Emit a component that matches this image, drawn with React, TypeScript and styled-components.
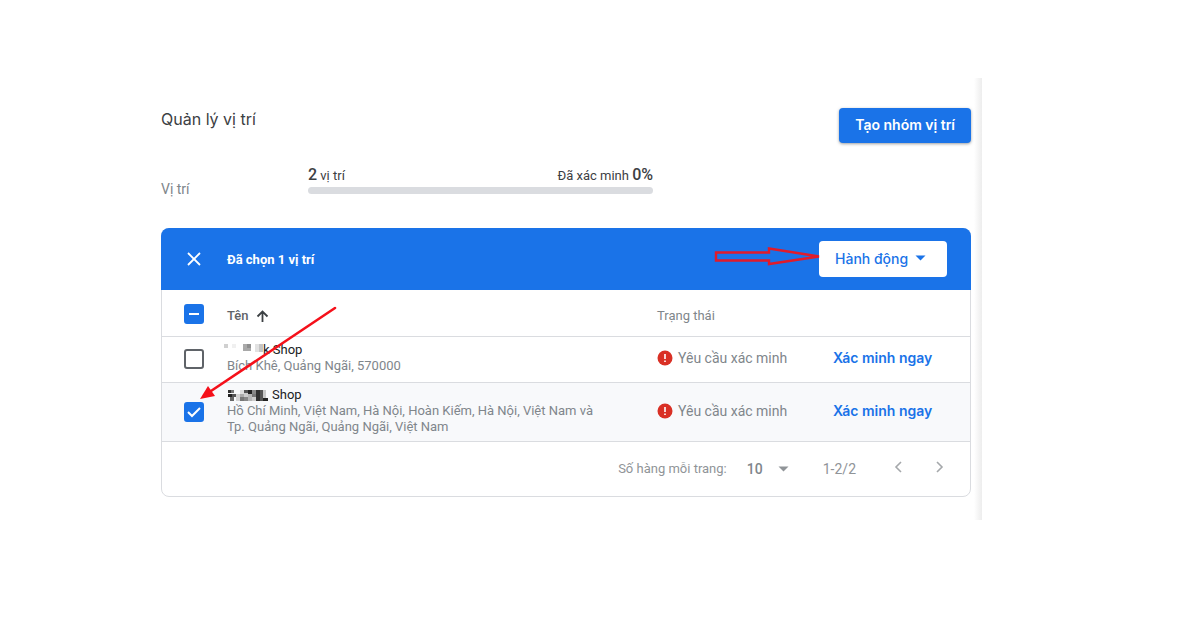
import React, { useEffect, useRef, useState } from 'react';
import styled, { createGlobalStyle } from 'styled-components';

const BLUE = '#1a73e8';
const LINE = '#dadce0';

const GlobalStyle = createGlobalStyle`
  *, *::before, *::after { box-sizing: border-box; }
  body { margin: 0; background: #fff; font-family: Roboto, "Noto Sans", sans-serif; font-size: 14px; color: #3c4043; }
  button, input, select { font: inherit; margin: 0; }
`;

const Page = styled.main`
  display: flex;
  padding: 78px 218px 104px 161px;
`;

const Content = styled.div`
  flex: 1;
  min-width: 0;
  padding: 30px 3px 23px 0;
`;

const SheetEdge = styled.div`
  width: 8px;
  background: linear-gradient(to right, #fff, #f4f4f4 60%, #ededed);
`;

const Header = styled.header`
  display: flex;
  justify-content: space-between;
  align-items: flex-start;
`;

const Title = styled.h1`
  margin: 0;
  font-family: Inter, "Noto Sans", sans-serif;
  font-size: 16px;
  font-weight: 400;
  line-height: 22px;
`;

const PrimaryButton = styled.button`
  height: 35px;
  padding: 0 16px 2px;
  border: 0;
  border-radius: 4px;
  background: ${BLUE};
  color: #fff;
  font-family: Inter, "Noto Sans", sans-serif;
  font-size: 14px;
  font-weight: 600;
  box-shadow: 0 1px 3px rgba(60, 64, 67, 0.5);
`;

const Stats = styled.section`
  display: flex;
  align-items: flex-end;
  margin: 22px 0 29px;
`;

const StatsLabel = styled.span`
  width: 147px;
  line-height: 20px;
  color: #80868b;
`;

const Meter = styled.div`
  width: 345px;
  padding-bottom: 5px;
`;

const MeterText = styled.div`
  display: flex;
  justify-content: space-between;
  line-height: 20px;
  margin-bottom: 1px;
  font-size: 13px;

  strong { font-size: 16px; font-weight: 500; }
`;

const MeterTrack = styled.div`
  height: 7px;
  border-radius: 4px;
  background: ${LINE};
`;

const Card = styled.section`
  position: relative;
  border: 1px solid ${LINE};
  border-radius: 8px;
`;

const SelectionBar = styled.div`
  position: relative;
  display: flex;
  align-items: center;
  height: 62px;
  margin: -1px -1px 0;
  padding: 0 24px 0 21px;
  border-radius: 8px 8px 0 0;
  background: ${BLUE};
  color: #fff;
`;

const IconButton = styled.button`
  display: grid;
  place-items: center;
  width: 24px;
  height: 24px;
  padding: 0;
  border: 0;
  background: none;
  color: inherit;
`;

const SelectionText = styled.span`
  flex: 1;
  margin-left: 21px;
  font-weight: 700;
  font-size: 13px;
`;

const MenuButton = styled.button`
  display: flex;
  align-items: center;
  gap: 7px;
  width: 128px;
  height: 36px;
  padding: 0 16px 2px;
  border: 0;
  border-radius: 4px;
  background: #fff;
  color: ${BLUE};
  font-family: Inter, "Noto Sans", sans-serif;
  font-weight: 500;
`;

const Table = styled.table`
  width: 100%;
  border-collapse: collapse;
  table-layout: fixed;
`;

const HeadRow = styled.tr`
  height: 46px;
  border-bottom: 1px solid ${LINE};
`;

const Row = styled.tr<{ $selected: boolean; $tall: boolean }>`
  height: ${(p) => (p.$tall ? 59 : 46)}px;
  border-bottom: 1px solid ${LINE};
  background: ${(p) => (p.$selected ? '#f8f9fb' : 'transparent')};
`;

const HeadCell = styled.th<{ $strong?: boolean }>`
  padding: 6px 0 0;
  text-align: left;
  font-size: 13px;
  font-weight: ${(p) => (p.$strong ? 500 : 400)};
  color: ${(p) => (p.$strong ? '#5f6368' : '#80868b')};
`;

const SortLabel = styled.span`
  display: flex;
  align-items: center;
  gap: 7px;
`;

const Cell = styled.td`
  padding: 0 0 2px;
  line-height: 16px;
  color: #80868b;
`;

const TickCell = styled(Cell)`
  padding: 0 0 0 22px;

  thead & { padding-top: 3px; }
`;

const NameCell = styled(Cell)`
  padding-right: 48px;
  font-size: 13px;
`;

const ShopName = styled.div`
  display: flex;
  align-items: center;
  gap: 4px;
  color: #202124;
`;

const Status = styled.span`
  display: flex;
  align-items: center;
  gap: 5px;
`;

const VerifyLink = styled.a`
  color: ${BLUE};
  text-decoration: none;
  font-family: Inter, "Noto Sans", sans-serif;
  font-weight: 600;
`;

const TickLabel = styled.label`
  display: grid;
  width: 20px;
  height: 20px;

  > * { grid-area: 1 / 1; }
  svg { pointer-events: none; }
`;

const TickInput = styled.input`
  appearance: none;
  width: 20px;
  height: 20px;
  border: 2px solid #5f6368;
  border-radius: 3px;
  background: #fff;

  &:checked, &:indeterminate { border-color: ${BLUE}; background: ${BLUE}; }
`;

const Footer = styled.footer`
  display: flex;
  align-items: center;
  justify-content: flex-end;
  height: 54px;
  padding-right: 18px;
  color: #909498;
`;

const PageSize = styled.label`
  display: flex;
  align-items: center;
  gap: 20px;
  font-size: 13px;
`;

const SelectBox = styled.span`
  display: grid;
  align-items: center;
  width: 42px;
  font-size: 14px;

  > * { grid-area: 1 / 1; }
  svg { justify-self: end; pointer-events: none; }
`;

const Select = styled.select`
  appearance: none;
  width: 100%;
  padding: 0;
  border: 0;
  background: none;
  color: #80868b;
  font-weight: 500;
`;

const Range = styled.span`
  margin: 0 30px 0 34px;
`;

const Pager = styled.nav`
  display: flex;
  gap: 18px;
  padding-bottom: 3px;
`;

const PointerArrow = styled.svg`
  position: absolute;
  left: 37px;
  top: 77px;
  pointer-events: none;
`;

const OutlineArrow = styled.svg`
  position: absolute;
  right: 148px;
  top: 19px;
  pointer-events: none;
`;

type Block = [x: number, y: number, w: number, h: number, fill: string];

const blocksOne: Block[] = [
  [-3, 0, 4, 4, '#d0d0d0'], [5, 0, 4, 4, '#f0f0f0'], [16, 0, 4, 4, '#aaa'],
  [20, 0, 4, 4, '#8e8e8e'], [16, 4, 8, 3, '#a8a8a8'], [28, 0, 4, 8, '#e2e2e2'],
  [32, 0, 4, 8, '#c5c5c5'],
];

const blocksTwo: Block[] = [
  [1, 1, 4, 3, '#333'], [4, 1, 3, 3, '#777'], [1, 5, 4, 3, '#222'], [5, 5, 4, 3, '#555'],
  [3, 8, 4, 4, '#666'], [9, 5, 4, 7, '#d4d4d4'], [13, 1, 4, 4, '#ddd'], [13, 8, 4, 4, '#777'],
  [13, 5, 4, 3, '#aaa'], [17, 1, 4, 3, '#555'], [17, 4, 4, 4, '#ccc'], [17, 8, 4, 4, '#888'],
  [21, 1, 4, 4, '#222'], [21, 5, 4, 7, '#b5b5b5'], [25, 1, 4, 4, '#888'], [25, 5, 4, 3, '#777'],
  [25, 8, 4, 4, '#ccc'], [29, 1, 4, 11, '#303030'], [33, 1, 3, 11, '#555'], [36, 9, 5, 3, '#222'],
  [36, 1, 3, 8, '#c8c8c8'],
];

function Mosaic({ blocks, width }: { blocks: Block[]; width: number }) {
  return (
    <svg width={width} height="12" overflow="visible" aria-hidden="true">
      {blocks.map(([x, y, w, h, fill]) => (
        <rect key={`${x}-${y}`} x={x} y={y} width={w} height={h} fill={fill} />
      ))}
    </svg>
  );
}

interface TickProps {
  label: string;
  checked: boolean;
  mixed?: boolean;
  onChange: () => void;
}

function Tick({ label, checked, mixed = false, onChange }: TickProps) {
  const ref = useRef<HTMLInputElement>(null);
  useEffect(() => {
    if (ref.current) ref.current.indeterminate = mixed;
  }, [mixed]);
  return (
    <TickLabel>
      <TickInput ref={ref} type="checkbox" aria-label={label} checked={checked} onChange={onChange} />
      <svg width="20" height="20" fill="none" stroke="#fff" strokeWidth="2">
        {mixed && <path d="M5 10h10" />}
        {!mixed && checked && <path d="M4 10l4 4 8-8" />}
      </svg>
    </TickLabel>
  );
}

function Caret({ color }: { color: string }) {
  return (
    <svg width="11" height="6" aria-hidden="true">
      <path d="M.5 .5h10l-5 5z" fill={color} />
    </svg>
  );
}

function Alert() {
  return (
    <svg width="16" height="16" aria-hidden="true">
      <circle cx="8" cy="8" r="7.5" fill="#d93025" />
      <path d="M8 4v5M8 10.500v1.600" stroke="#fff" strokeWidth="1.6" />
    </svg>
  );
}

const shops = [
  { id: 1, initial: 'k', blocks: blocksOne, mosaicWidth: 32, tall: false, address: 'Bích Khê, Quảng Ngãi, 570000' },
  { id: 2, initial: '', blocks: blocksTwo, mosaicWidth: 41, tall: true, address: 'Hồ Chí Minh, Việt Nam, Hà Nội, Hoàn Kiếm, Hà Nội, Việt Nam và Tp. Quảng Ngãi, Quảng Ngãi, Việt Nam' },
];

export default function App() {
  const [selected, setSelected] = useState<number[]>([2]);
  const all = selected.length === shops.length;
  const toggle = (id: number) =>
    setSelected((s) => (s.includes(id) ? s.filter((x) => x !== id) : [...s, id]));

  return (
    <Page>
      <GlobalStyle />
      <Content>
        <Header>
          <Title>Quản lý vị trí</Title>
          <PrimaryButton type="button">Tạo nhóm vị trí</PrimaryButton>
        </Header>
        <Stats>
          <StatsLabel>Vị trí</StatsLabel>
          <Meter>
            <MeterText>
              <span><strong>2</strong> vị trí</span>
              <span>Đã xác minh <strong>0%</strong></span>
            </MeterText>
            <MeterTrack />
          </Meter>
        </Stats>
        <Card>
          <SelectionBar>
            <IconButton type="button" aria-label="Bỏ chọn" onClick={() => setSelected([])}>
              <svg width="14" height="14" stroke="currentColor" strokeWidth="1.8">
                <path d="M1 1l12 12M13 1L1 13" />
              </svg>
            </IconButton>
            <SelectionText>Đã chọn {selected.length} vị trí</SelectionText>
            <MenuButton type="button" aria-haspopup="menu">
              Hành động <Caret color={BLUE} />
            </MenuButton>
            <OutlineArrow width="112" height="20" fill="none" stroke="#e01b2b" strokeWidth="2.4">
              <path d="M5 5.500h53v-4L108 9.500 58 17v-3.500H5z" />
            </OutlineArrow>
          </SelectionBar>
          <Table>
            <colgroup>
              <col style={{ width: 65 }} />
              <col />
              <col style={{ width: 176 }} />
              <col style={{ width: 137 }} />
            </colgroup>
            <thead>
              <HeadRow>
                <TickCell>
                  <Tick
                    label="Chọn tất cả"
                    checked={all}
                    mixed={selected.length > 0 && !all}
                    onChange={() => setSelected(all ? [] : shops.map((s) => s.id))}
                  />
                </TickCell>
                <HeadCell $strong scope="col">
                  <SortLabel>
                    Tên
                    <svg width="13" height="12" fill="none" stroke="#3c4043" strokeWidth="1.8">
                      <path d="M6.500 12V1.500M1.500 6.500l5-5 5 5" />
                    </svg>
                  </SortLabel>
                </HeadCell>
                <HeadCell scope="col">Trạng thái</HeadCell>
                <Cell />
              </HeadRow>
            </thead>
            <tbody>
              {shops.map((shop) => (
                <Row key={shop.id} $selected={selected.includes(shop.id)} $tall={shop.tall}>
                  <TickCell>
                    <Tick
                      label={`Chọn ${shop.address}`}
                      checked={selected.includes(shop.id)}
                      onChange={() => toggle(shop.id)}
                    />
                  </TickCell>
                  <NameCell>
                    <ShopName>
                      <Mosaic blocks={shop.blocks} width={shop.mosaicWidth} />
                      <span>{shop.initial ? `${shop.initial} Shop` : 'Shop'}</span>
                    </ShopName>
                    {shop.address}
                  </NameCell>
                  <Cell>
                    <Status><Alert />Yêu cầu xác minh</Status>
                  </Cell>
                  <Cell>
                    <VerifyLink href="#verify">Xác minh ngay</VerifyLink>
                  </Cell>
                </Row>
              ))}
            </tbody>
          </Table>
          <Footer>
            <PageSize>
              Số hàng mỗi trang:
              <SelectBox>
                <Select defaultValue="10">
                  <option>10</option>
                  <option>25</option>
                </Select>
                <Caret color="#909498" />
              </SelectBox>
            </PageSize>
            <Range>1-2/2</Range>
            <Pager aria-label="Phân trang">
              <IconButton type="button" aria-label="Trang trước">
                <svg width="8" height="12" fill="none" stroke="#a5a8ab" strokeWidth="1.6">
                  <path d="M7 1L2 6l5 5" />
                </svg>
              </IconButton>
              <IconButton type="button" aria-label="Trang sau">
                <svg width="8" height="12" fill="none" stroke="#a5a8ab" strokeWidth="1.6">
                  <path d="M1 1l5 5-5 5" />
                </svg>
              </IconButton>
            </Pager>
          </Footer>
          <PointerArrow width="138" height="95" aria-hidden="true">
            <path d="M136 2L12 85" stroke="#f5101a" strokeWidth="2.6" strokeLinecap="round" />
            <path d="M1 93L9 80l7 10z" fill="#f5101a" />
          </PointerArrow>
        </Card>
      </Content>
      <SheetEdge />
    </Page>
  );
}
